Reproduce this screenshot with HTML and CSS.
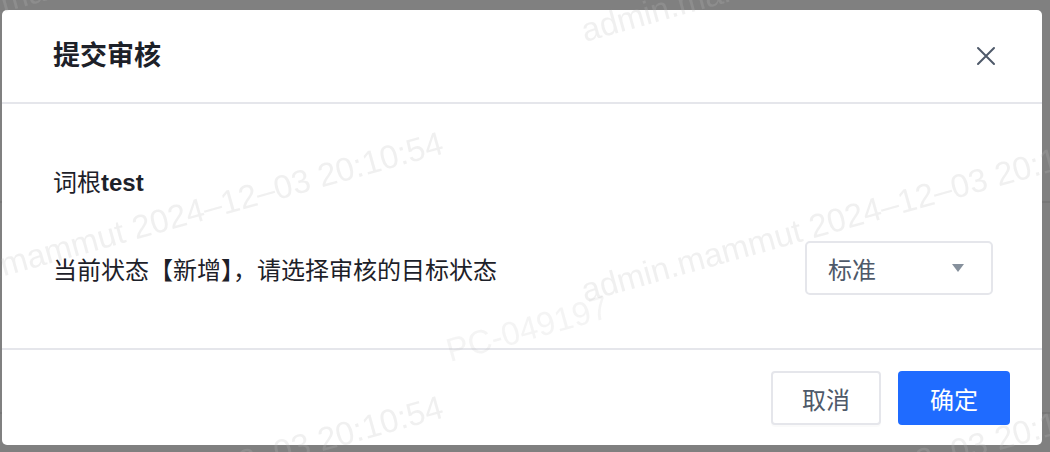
FILE: index.html
```html
<!DOCTYPE html>
<html lang="zh-CN">

<head>
    <meta charset="UTF-8">
    <meta name="viewport" content="width=device-width, initial-scale=1.0">
    <title>提交审核</title>
    <link rel="stylesheet" href="styles.css">
</head>

<body>
    <div class="mask">
        <div class="modal">
            <div class="modal-header">
                <h2 class="modal-title">提交审核</h2>
                <button class="modal-close" type="button" aria-label="关闭">
                    <svg width="20" height="20" viewBox="0 0 20 20">
                        <path d="M2 2 L18 18 M18 2 L2 18" stroke="#4e5969" stroke-width="2" stroke-linecap="round" fill="none" />
                    </svg>
                </button>
            </div>

            <div class="modal-body">
                <p class="word-root">词根<b>test</b></p>
                <div class="status-row">
                    <span>当前状态【新增】，请选择审核的目标状态</span>
                    <div class="select">
                        <span class="select-value">标准</span>
                        <span class="select-arrow"></span>
                    </div>
                </div>
            </div>

            <div class="modal-footer">
                <button class="btn btn-cancel" type="button">取消</button>
                <button class="btn btn-ok" type="button">确定</button>
            </div>
        </div>
    </div>

    <!-- marca de agua encima de todo -->
    <div class="watermark">
        <span class="wm wm-a">admin.mammut 2024–12–03 20:10:54</span>
        <span class="wm wm-b">admin.mammut 2024–12–03 20:10:54</span>
        <span class="wm wm-c">admin.mammut 2024–12–03 20:10:54</span>
        <span class="wm wm-d">admin.mammut 2024–12–03 20:10:54</span>
        <span class="wm wm-e">admin.mammut 2024–12–03 20:10:54</span>
        <span class="wm wm-f">admin.mammut 2024–12–03 20:10:54</span>
        <span class="wm wm-pc">PC-049197</span>
    </div>
</body>

</html>
```

FILE: styles.css
```css
body {
    margin: 0;
    padding: 0;
    font-family: "Liberation Sans", "Noto Sans CJK SC", sans-serif;
    color: #1d2129;
    overflow: hidden;
}

.mask {
    width: 1050px;
    height: 452px;
    background-color: #808080;
    /* filas de la tabla que queda detrás */
    background-image: repeating-linear-gradient(to bottom, transparent 0 201px, #777777 201px 203px, transparent 203px 211px);
    padding: 10px 0 0 2px;
    box-sizing: border-box;
}

.modal {
    width: 1040px;
    height: 435px;
    background-color: #fff;
    border-radius: 5px;
    display: flex;
    flex-direction: column;
}

.modal-header {
    height: 92px;
    display: flex;
    align-items: center;
    justify-content: space-between;
    padding: 0 46px 0 51px;
    border-bottom: 2px solid #e5e6eb;
}

.modal-title {
    margin: 0;
    font-size: 27px;
    font-weight: 700;
    color: #1d2129;
    line-height: 1;
}

.modal-close {
    border: none;
    background: none;
    padding: 0;
    width: 20px;
    height: 20px;
    cursor: pointer;
}

.modal-close svg {
    display: block;
}

.modal-body {
    height: 244px;
    box-sizing: border-box;
    padding: 62px 49px 0 51px;
}

.word-root {
    margin: 0;
    font-size: 24px;
    line-height: 34px;
}

.word-root b {
    font-weight: 700;
}

.status-row {
    margin-top: 41px;
    display: flex;
    align-items: center;
    justify-content: space-between;
    font-size: 24px;
}

.select {
    width: 188px;
    height: 54px;
    box-sizing: border-box;
    border: 2px solid #e5e6eb;
    border-radius: 5px;
    display: flex;
    align-items: center;
    justify-content: space-between;
    padding: 0 27px 0 21px;
}

.select-value {
    color: #4e5969;
    font-size: 24px;
}

.select-arrow {
    width: 0;
    height: 0;
    border-left: 6px solid transparent;
    border-right: 6px solid transparent;
    border-top: 8px solid #86909c;
}

.modal-footer {
    flex: 1;
    border-top: 2px solid #e5e6eb;
    display: flex;
    justify-content: flex-end;
    align-items: flex-start;
    gap: 17px;
    padding: 21px 32px 0 0;
}

.btn {
    height: 54px;
    border-radius: 4px;
    font-family: "Liberation Sans", "Noto Sans CJK SC", sans-serif;
    font-size: 24px;
    cursor: pointer;
}

.btn-cancel {
    width: 110px;
    background-color: #fff;
    border: 2px solid #e5e6eb;
    color: #4e5969;
    box-shadow: 0 2px 0 rgba(0, 0, 0, 0.02);
}

.btn-ok {
    width: 112px;
    background-color: #1f6bff;
    border: none;
    color: #fff;
}

/* --- Marca de agua --- */
.watermark {
    position: fixed;
    top: 0;
    left: 0;
    width: 1050px;
    height: 452px;
    overflow: hidden;
    pointer-events: none;
}

.wm {
    position: absolute;
    white-space: nowrap;
    font-family: "Liberation Sans", sans-serif;
    font-size: 33px;
    line-height: 33px;
    color: rgba(188, 188, 188, 0.22);
    transform-origin: 0 28px;
    transform: rotate(-15.6deg);
}

.wm-a { left: -92px; top: 275px; }
.wm-b { left: 585px; top: 274px; }
.wm-c { left: 585px; top: 14px; }
.wm-d { left: -92px; top: 539px; }
.wm-e { left: 585px; top: 538px; }
.wm-f { left: -92px; top: 11px; }
.wm-pc { left: 450px; top: 334px; color: rgba(188, 188, 188, 0.16); }
```
